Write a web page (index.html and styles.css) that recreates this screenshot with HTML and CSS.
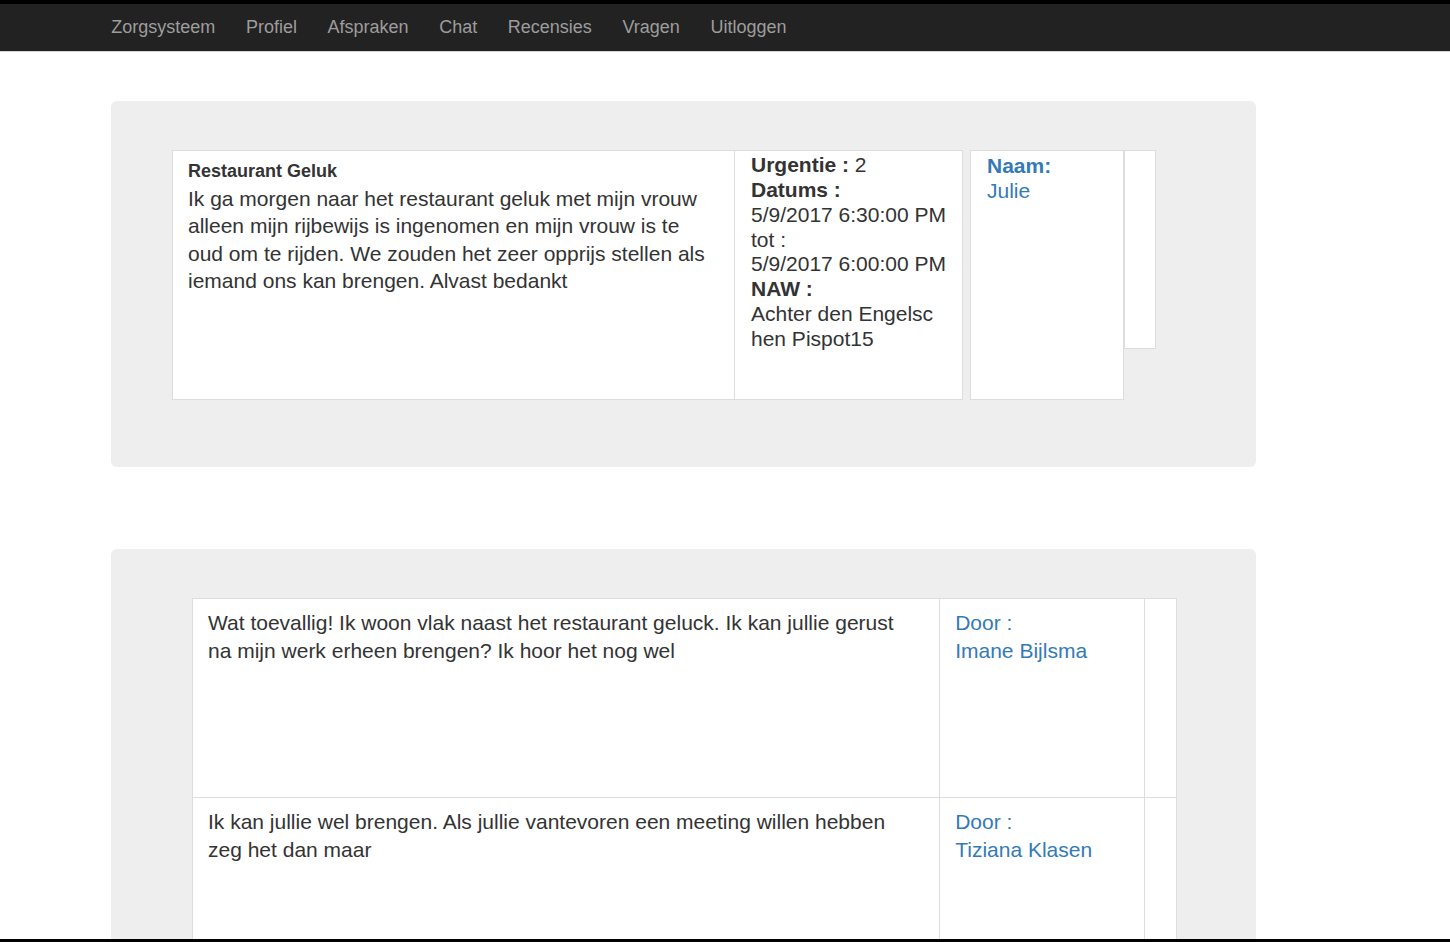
FILE: index.html
```html
<!DOCTYPE html>
<html lang="nl">
<head>
<meta charset="utf-8">
<title>Zorgsysteem - Vraag</title>
<link rel="stylesheet" href="styles.css">
</head>
<body>
<nav class="navbar">
  <ul class="nav">
    <li><a href="#">Zorgsysteem</a></li>
    <li><a href="#">Profiel</a></li>
    <li><a href="#">Afspraken</a></li>
    <li><a href="#">Chat</a></li>
    <li><a href="#">Recensies</a></li>
    <li><a href="#">Vragen</a></li>
    <li><a href="#">Uitloggen</a></li>
  </ul>
</nav>

<main class="container">
  <section class="jumbotron jumbo-question">
    <div class="question-row">
      <div class="cell cell-text">
        <h4 class="q-title">Restaurant Geluk</h4>
        <p class="q-body">Ik ga morgen naar het restaurant geluk met mijn vrouw alleen mijn rijbewijs is ingenomen en mijn vrouw is te oud om te rijden. We zouden het zeer opprijs stellen als iemand ons kan brengen. Alvast bedankt</p>
      </div>
      <div class="cell cell-info">
        <div><b>Urgentie :</b> 2</div>
        <div><b>Datums :</b></div>
        <div class="nowrap">5/9/2017 6:30:00 PM</div>
        <div>tot :</div>
        <div class="nowrap">5/9/2017 6:00:00 PM</div>
        <div><b>NAW :</b></div>
        <div class="breakall">Achter den Engelschen Pispot15</div>
      </div>
      <div class="cell cell-name">
        <div class="name-label">Naam:</div>
        <div class="name-value">Julie</div>
      </div>
      <div class="cell cell-empty"></div>
    </div>
  </section>

  <section class="jumbotron jumbo-answers">
    <table class="answers">
      <tr>
        <td class="a-text">Wat toevallig! Ik woon vlak naast het restaurant geluck. Ik kan jullie gerust na mijn werk erheen brengen? Ik hoor het nog wel</td>
        <td class="a-door"><div>Door :</div><div>Imane Bijlsma</div></td>
        <td class="a-empty"></td>
      </tr>
      <tr>
        <td class="a-text">Ik kan jullie wel brengen. Als jullie vantevoren een meeting willen hebben zeg het dan maar</td>
        <td class="a-door"><div>Door :</div><div>Tiziana Klasen</div></td>
        <td class="a-empty"></td>
      </tr>
    </table>
  </section>
</main>
<div class="screen-edge"></div>
</body>
</html>
```

FILE: styles.css
```css
html, body {
  margin: 0;
  padding: 0;
  background: #fff;
}

body {
  font-family: "Liberation Sans", Arial, Helvetica, sans-serif;
  color: #333;
  border-top: 4px solid #000;
}

.navbar {
  background: #222;
  height: 47px;
  border-bottom: 1px solid #d4d4d4;
}

.nav {
  list-style: none;
  margin: 0;
  padding: 0 0 0 96px;
  display: flex;
}

.nav a {
  display: block;
  padding: 0 15.3px;
  line-height: 47px;
  font-size: 18px;
  color: #9d9d9d;
  text-decoration: none;
}

.container {
  padding-left: 111px;
  width: 1145px;
}

.jumbotron {
  background: #eee;
  border-radius: 6px;
}

.jumbo-question {
  margin-top: 49px;
  padding: 49px 100px 67px 61px;
}

.question-row {
  display: flex;
  align-items: flex-start;
}

.cell {
  background: #fff;
  border: 1px solid #ddd;
  box-sizing: border-box;
}

.cell-text {
  width: 563px;
  height: 250px;
  padding: 6px 15px 0 15px;
}

.q-title {
  margin: 0;
  font-size: 18px;
  line-height: 28px;
  font-weight: bold;
}

.q-body {
  margin: 0;
  font-size: 21px;
  line-height: 27.3px;
}

.cell-info {
  width: 229px;
  height: 250px;
  margin-left: -1px;
  padding: 2px 21px 0 16px;
  font-size: 21px;
  line-height: 24.85px;
}

.nowrap {
  white-space: nowrap;
}

.breakall {
  word-break: break-all;
}

.cell-name {
  width: 154px;
  height: 250px;
  margin-left: 7px;
  padding: 2px 15px 0 16px;
  font-size: 21px;
  color: #337ab7;
}

.name-label {
  font-weight: bold;
  line-height: 25px;
}

.name-value {
  line-height: 25px;
}

.cell-empty {
  width: 32px;
  height: 199px;
}

.jumbo-answers {
  margin-top: 82px;
  padding: 49px 80px 60px 81px;
}

.answers {
  border-collapse: collapse;
  background: #fff;
  width: 985px;
  font-size: 21px;
  line-height: 28px;
}

.answers td {
  border: 1px solid #ddd;
  vertical-align: top;
  height: 199px;
  box-sizing: border-box;
  padding: 10px 20px 0 15px;
}

.answers .a-text {
  width: 748px;
}

.answers .a-door {
  width: 205px;
  color: #337ab7;
  padding-right: 10px;
}

.answers .a-empty {
  width: 32px;
  padding: 0;
}

.screen-edge {
  position: fixed;
  left: 0;
  right: 0;
  bottom: 0;
  height: 3px;
  background: #000;
}
```
